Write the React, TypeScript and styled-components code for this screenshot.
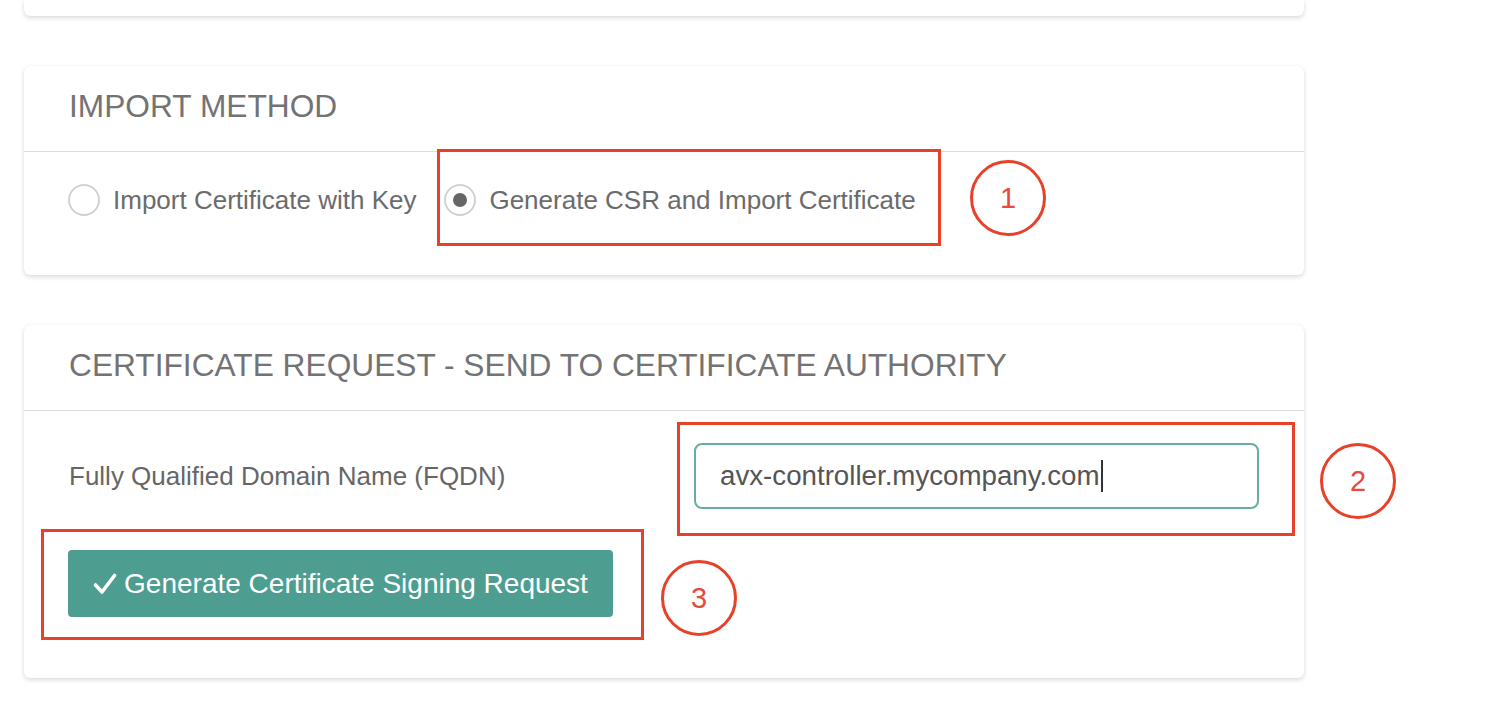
import React from 'react'
import styled, { createGlobalStyle } from 'styled-components'

const GlobalStyle = createGlobalStyle`
  html, body {
    margin: 0;
    padding: 0;
    background: #ffffff;
    font-family: 'Liberation Sans', Arial, sans-serif;
  }
`

const Page = styled.div`
  width: 1496px;
  height: 718px;
  overflow: hidden;
  display: flex;
  flex-direction: column;
  gap: 50px;
  padding-left: 24px;
  box-sizing: border-box;
`

const Card = styled.section`
  position: relative;
  width: 1280px;
  background: #ffffff;
  border-radius: 6px;
  box-shadow: 0 2px 5px rgba(0, 0, 0, 0.14), 0 0 1px rgba(0, 0, 0, 0.08);
`

const StubCard = styled(Card)`
  height: 16px;
  border-top-left-radius: 0;
  border-top-right-radius: 0;
`

const CardHeader = styled.div`
  height: 86px;
  display: flex;
  align-items: center;
  padding: 0 45px 4px;
  box-sizing: border-box;
  border-bottom: 1px solid #dedede;
  font-size: 31.7px;
  color: #737373;
  text-transform: uppercase;
`

const RadioBody = styled.div`
  height: 123px;
  display: flex;
  align-items: flex-start;
  padding: 32px 44px 0;
  box-sizing: border-box;
`

const RadioOption = styled.label`
  display: flex;
  align-items: center;
  gap: 13px;
  margin-right: 28px;
  height: 32px;
  font-size: 26px;
  color: #6b6b6b;
`

const RadioCircle = styled.span<{ $checked?: boolean }>`
  width: 32px;
  height: 32px;
  box-sizing: border-box;
  border: 2px solid #d2d2d2;
  border-radius: 50%;
  display: flex;
  align-items: center;
  justify-content: center;
  &::after {
    content: '';
    width: 14px;
    height: 14px;
    border-radius: 50%;
    background: ${p => (p.$checked ? '#666666' : 'transparent')};
  }
`

const RequestBody = styled.div`
  padding: 32px 45px 61px 44px;
  display: flex;
  flex-direction: column;
  gap: 41px;
`

const FieldRow = styled.div`
  display: grid;
  grid-template-columns: 1fr 565px;
  align-items: center;
`

const FieldLabel = styled.span`
  font-size: 26px;
  color: #666666;
  padding-left: 1px;
`

const InputBox = styled.div`
  height: 66px;
  box-sizing: border-box;
  border: 2px solid #6aaca1;
  border-radius: 8px;
  display: flex;
  align-items: center;
  padding-left: 24px;
  font-size: 27.7px;
  color: #555555;
`

const Caret = styled.span`
  display: inline-block;
  width: 2px;
  height: 32px;
  background: #333333;
  margin-left: 1px;
`

const PrimaryButton = styled.button`
  align-self: flex-start;
  width: 545px;
  height: 67px;
  border: none;
  border-radius: 4px;
  background: #4d9d90;
  color: #ffffff;
  font-family: 'Liberation Sans', Arial, sans-serif;
  font-size: 28px;
  display: flex;
  align-items: center;
  justify-content: center;
  gap: 7px;
  padding: 0;
`

const Mark = styled.div<{ $left: number; $top: number; $w: number; $h: number }>`
  position: absolute;
  left: ${p => p.$left}px;
  top: ${p => p.$top}px;
  width: ${p => p.$w}px;
  height: ${p => p.$h}px;
  box-sizing: border-box;
  border: 3px solid #e8412a;
  pointer-events: none;
`

const Step = styled.div<{ $left: number; $top: number }>`
  position: absolute;
  left: ${p => p.$left}px;
  top: ${p => p.$top}px;
  width: 76px;
  height: 76px;
  box-sizing: border-box;
  border: 3px solid #e8412a;
  border-radius: 50%;
  display: flex;
  align-items: center;
  justify-content: center;
  font-size: 29px;
  color: #e64a3c;
`

const CheckIcon = () => (
  <svg width="24" height="22" viewBox="0 0 24 22" fill="none">
    <path d="M2.5 12 L9 19 L21.5 2.5" stroke="#ffffff" strokeWidth="3.6" strokeLinecap="round" strokeLinejoin="round" />
  </svg>
)

export default function App() {
  return (
    <>
      <GlobalStyle />
      <Page>
        <StubCard />

        <Card>
          <CardHeader>Import Method</CardHeader>
          <RadioBody>
            <RadioOption>
              <RadioCircle />
              Import Certificate with Key
            </RadioOption>
            <RadioOption>
              <RadioCircle $checked />
              Generate CSR and Import Certificate
            </RadioOption>
          </RadioBody>
          <Mark $left={413} $top={83} $w={504} $h={97} />
          <Step $left={946} $top={94}>1</Step>
        </Card>

        <Card>
          <CardHeader>Certificate Request - Send to Certificate Authority</CardHeader>
          <RequestBody>
            <FieldRow>
              <FieldLabel>Fully Qualified Domain Name (FQDN)</FieldLabel>
              <InputBox>
                avx-controller.mycompany.com
                <Caret />
              </InputBox>
            </FieldRow>
            <PrimaryButton>
              <CheckIcon />
              Generate Certificate Signing Request
            </PrimaryButton>
          </RequestBody>
          <Mark $left={653} $top={97} $w={618} $h={114} />
          <Step $left={1296} $top={118}>2</Step>
          <Mark $left={17} $top={204} $w={603} $h={111} />
          <Step $left={637} $top={235}>3</Step>
        </Card>
      </Page>
    </>
  )
}
